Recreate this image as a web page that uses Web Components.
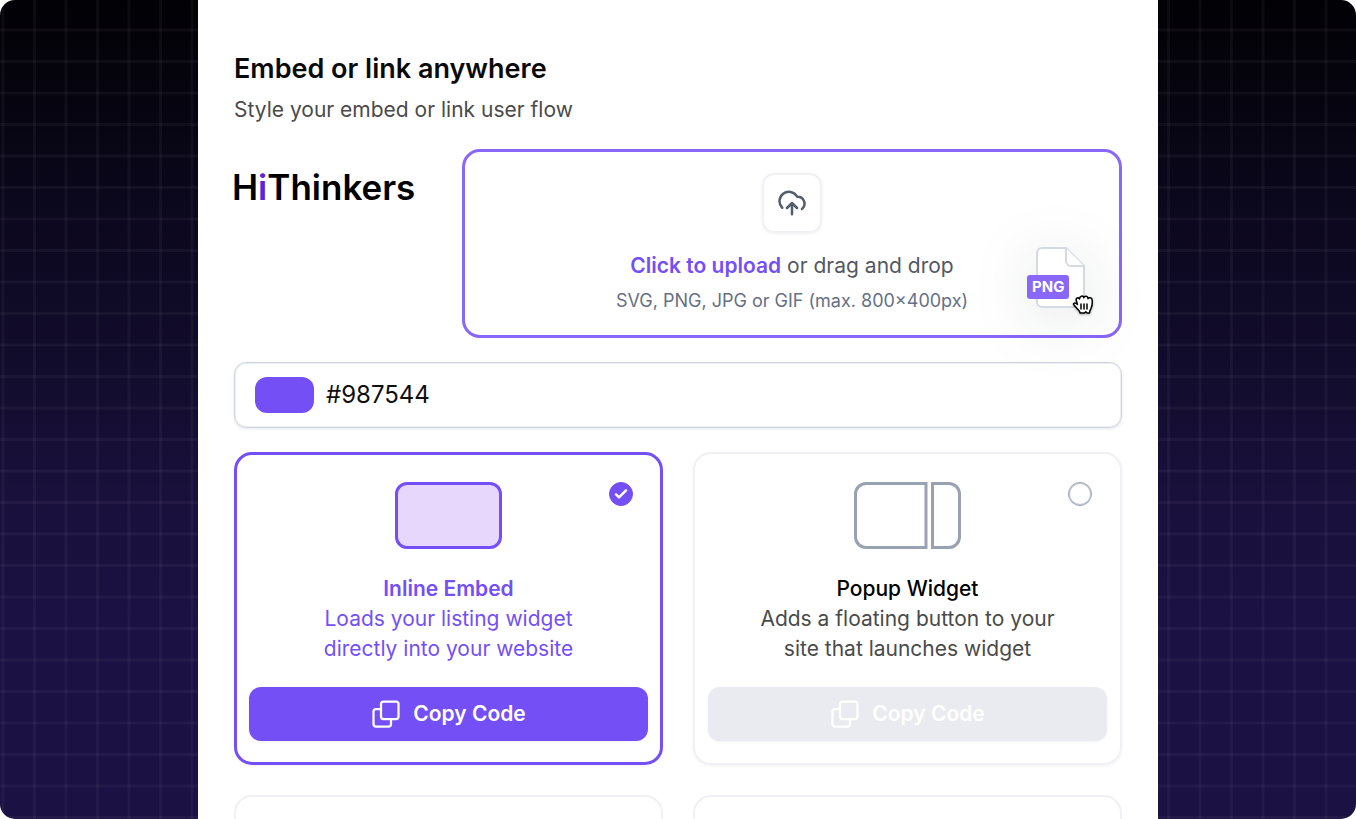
<!DOCTYPE html>
<html lang="en">
<head>
<meta charset="utf-8">
<meta name="viewport" content="width=device-width, initial-scale=1">
<title>Embed or link anywhere</title>
<style>
  body {
    margin: 0;
    background: #fff;
    font-family: Inter, "Liberation Sans", sans-serif;
  }
</style>
</head>
<body>
<embed-page>
  <page-heading>
    <span slot="title">Embed or link anywhere</span>
    <span slot="text">Style your embed or link user flow</span>
  </page-heading>
  <brand-row>
    <brand-logo></brand-logo>
    <upload-box>
      <file-badge type="PNG"></file-badge>
    </upload-box>
  </brand-row>
  <color-field color="#744ff6" value="#987544"></color-field>
  <option-grid>
    <embed-option checked>
      <svg slot="icon" width="107" height="67" viewBox="0 0 107 67" fill="#e8d7fd" stroke="#744ff6" stroke-width="3"><rect x="1.5" y="1.5" width="104" height="64" rx="10.5"/></svg>
      <span slot="title">Inline Embed</span>
      <span slot="text">Loads your listing widget<br>directly into your website</span>
    </embed-option>
    <embed-option>
      <svg slot="icon" width="107" height="67" viewBox="0 0 107 67" fill="none" stroke="#98a2b3" stroke-width="3"><path d="M72 1.5H12A10.500 10.500 0 0 0 1.500 12v43A10.500 10.500 0 0 0 12 65.500h60z"/><path d="M78.500 1.500H95A10.500 10.500 0 0 1 105.500 12v43A10.500 10.500 0 0 1 95 65.500H78.500z"/></svg>
      <span slot="title">Popup Widget</span>
      <span slot="text">Adds a floating button to your<br>site that launches widget</span>
    </embed-option>
    <empty-card></empty-card>
    <empty-card></empty-card>
  </option-grid>
</embed-page>

<script>
class EmbedPage extends HTMLElement {
  constructor() {
    super();
    this.shadowDom = this.attachShadow({ mode: 'open' });
  }

  connectedCallback() {
    this.shadowDom.innerHTML = `
    <style>
      :host {
        --line: rgba(255, 255, 255, .04);
        --soft: rgba(255, 255, 255, .015);
        display: flex;
        justify-content: center;
        height: 100vh;
        overflow: hidden;
        border-radius: 15px;
        background:
          linear-gradient(90deg, transparent 1px, var(--soft) 1px 2px, var(--line) 2px 4px, var(--soft) 4px 5px, transparent 5px 33px, var(--line) 33px 36px, transparent 36px) 0 0 / 63px 63px,
          linear-gradient(transparent 28px, var(--soft) 28px 29px, var(--line) 29px 31px, var(--soft) 31px 32px, transparent 32px 60px, var(--line) 60px 63px) 0 0 / 63px 63px,
          linear-gradient(#020105, #06040f 12%, #0b071c 24%, #130d2f 48%, #1a103c 61%, #1b1142 75%, #1b1142);
      }
      main {
        display: flex;
        flex-direction: column;
        gap: 24px;
        box-sizing: border-box;
        width: 100%;
        max-width: 960px;
        height: max-content;
        min-height: 100%;
        padding: 49px 36px 36px;
        background: #fff;
      }
    </style>
    <main><slot></slot></main>
    `;
  }
}

class PageHeading extends HTMLElement {
  constructor() {
    super();
    this.shadowDom = this.attachShadow({ mode: 'open' });
  }

  connectedCallback() {
    this.shadowDom.innerHTML = `
    <style>
      :host { display: block; }
      h1 {
        margin: 0;
        font-size: 27px;
        font-weight: 600;
        line-height: 40px;
        color: #0a0a0a;
      }
      p {
        margin: 6px 0 0;
        font-size: 21px;
        line-height: 30px;
        color: #4a4a4a;
      }
    </style>
    <h1><slot name="title"></slot></h1>
    <p><slot name="text"></slot></p>
    `;
  }
}

class BrandRow extends HTMLElement {
  constructor() {
    super();
    this.shadowDom = this.attachShadow({ mode: 'open' });
  }

  connectedCallback() {
    this.shadowDom.innerHTML = `
    <style>
      :host {
        display: grid;
        grid-template-columns: 180px 1fr;
        gap: 48px;
      }
    </style>
    <slot></slot>
    `;
  }
}

class BrandLogo extends HTMLElement {
  constructor() {
    super();
    this.shadowDom = this.attachShadow({ mode: 'open' });
  }

  connectedCallback() {
    this.shadowDom.innerHTML = `
    <style>
      :host {
        display: block;
        margin-left: -2px;
        padding-top: 16px;
        font-size: 35px;
        font-weight: 600;
        line-height: 44px;
        color: #000;
        white-space: nowrap;
      }
      span { color: #5925dc; }
    </style>
    H<span>i</span>Thinkers
    `;
  }
}

class UploadBox extends HTMLElement {
  constructor() {
    super();
    this.shadowDom = this.attachShadow({ mode: 'open' });
  }

  connectedCallback() {
    this.shadowDom.innerHTML = `
    <style>
      :host {
        position: relative;
        display: flex;
        flex-direction: column;
        align-items: center;
        box-sizing: border-box;
        padding: 21px 24px;
        border: 3px solid #8867f9;
        border-radius: 18px;
      }
      .icon {
        display: grid;
        place-items: center;
        box-sizing: border-box;
        width: 60px;
        height: 60px;
        margin-bottom: 18px;
        border: 2px solid #f0f1f4;
        border-radius: 12px;
        box-shadow: 0 1px 3px rgba(16, 24, 40, .06);
      }
      p {
        margin: 0;
        font-size: 21px;
        line-height: 30px;
        color: #535862;
      }
      button {
        padding: 0;
        border: 0;
        background: none;
        font: inherit;
        font-weight: 600;
        color: #744ff6;
        cursor: pointer;
      }
      small {
        margin-top: 6px;
        font-size: 18px;
        line-height: 27px;
        color: #667085;
      }
      ::slotted(file-badge) {
        position: absolute;
        right: 24px;
        bottom: 19px;
      }
    </style>
    <div class="icon">
      <svg width="30" height="30" viewBox="0 0 20 20" fill="none" stroke="#535e6c" stroke-width="1.667" stroke-linecap="round" stroke-linejoin="round"><path d="M6.667 13.333 10 10m0 0 3.333 3.333M10 10v7.500m6.667-3.548a4.583 4.583 0 0 0-2.917-8.119.516.516 0 0 1-.444-.25 6.250 6.250 0 1 0-9.816 7.580"/></svg>
    </div>
    <p><button type="button">Click to upload</button> or drag and drop</p>
    <small>SVG, PNG, JPG or GIF (max. 800×400px)</small>
    <slot></slot>
    `;
  }
}

class FileBadge extends HTMLElement {
  constructor() {
    super();
    this.shadowDom = this.attachShadow({ mode: 'open' });
  }

  connectedCallback() {
    this.shadowDom.innerHTML = `
    <style>
      :host {
        display: block;
        width: 68px;
        height: 69px;
      }
      .page {
        display: block;
        margin-left: 9px;
        filter: drop-shadow(0 12px 30px rgba(16, 24, 40, .13));
      }
      .type {
        position: absolute;
        top: 28px;
        left: 0;
        padding: 0 5px;
        border-radius: 3px;
        background: #8867f9;
        font-size: 15px;
        font-weight: 700;
        line-height: 24px;
        color: #fff;
      }
      .hand {
        position: absolute;
        right: 0;
        bottom: 0;
        filter: drop-shadow(0 1px 1px rgba(0, 0, 0, .3));
      }
    </style>
    <svg class="page" width="49" height="61" viewBox="0 0 49 61" fill="#fff" stroke="#d5d9e2" stroke-width="2" stroke-linejoin="round"><path d="M6 1h24l18 18v36a5 5 0 0 1-5 5H6a5 5 0 0 1-5-5V6a5 5 0 0 1 5-5z"/><path d="M30 1v13a5 5 0 0 0 5 5h13"/></svg>
    <span class="type">${this.getAttribute('type')}</span>
    <svg class="hand" width="23" height="22" viewBox="0 0 23 22" fill="#fff" stroke="#000" stroke-width="1.500" stroke-linecap="round" stroke-linejoin="round"><path d="M5.500 10.500 4.300 6.500C3.600 4 6.500 3 7.500 5c0-3.300 3.600-3.800 4.300-1.300 1-2.400 4.200-1.800 4.200 1 .7-1.600 4-1.200 4.200 1.500.3 3.500-.2 6.300-1.200 8.300-.7 1.500-1.500 2.500-1.500 4.500h-2.400l-1.300-1.300-1.300 1.300H8.200c-.4-2-2.200-3.300-3.600-5L1.800 10.800c-1-1.500.8-2.800 3.700-.3z"/><path d="M9 10v5M12 10v5M15 10v5"/></svg>
    `;
  }
}

class ColorField extends HTMLElement {
  constructor() {
    super();
    this.shadowDom = this.attachShadow({ mode: 'open' });
  }

  connectedCallback() {
    this.shadowDom.innerHTML = `
    <style>
      :host {
        display: flex;
        align-items: center;
        gap: 12px;
        box-sizing: border-box;
        height: 66px;
        padding: 0 20px;
        border: 1px solid #d0d5dd;
        border-radius: 12px;
        box-shadow: inset 0 0 0 1px rgba(208, 213, 221, .4), 0 1px 3px rgba(16, 24, 40, .1);
      }
      input {
        margin: 0;
        padding: 0;
        border: 0;
        background: none;
      }
      input[type=color] {
        width: 59px;
        height: 36px;
        appearance: none;
        border-radius: 12px;
        overflow: hidden;
      }
      input[type=color]::-webkit-color-swatch-wrapper { padding: 0; }
      input[type=color]::-webkit-color-swatch { border: 0; }
      input[type=text] {
        flex: 1;
        min-width: 0;
        height: 36px;
        font: 24px/36px Inter, "Liberation Sans", sans-serif;
        color: #101010;
      }
    </style>
    <input type="color" aria-label="Pick color" value="${this.getAttribute('color')}">
    <input type="text" aria-label="Hex color" value="${this.getAttribute('value')}">
    `;
  }
}

class OptionGrid extends HTMLElement {
  constructor() {
    super();
    this.shadowDom = this.attachShadow({ mode: 'open' });
  }

  connectedCallback() {
    this.shadowDom.innerHTML = `
    <style>
      :host {
        display: grid;
        grid-template-columns: 1fr 1fr;
        gap: 30px;
      }
    </style>
    <slot></slot>
    `;
  }
}

class EmbedOption extends HTMLElement {
  constructor() {
    super();
    this.shadowDom = this.attachShadow({ mode: 'open' });
  }

  connectedCallback() {
    const checked = this.hasAttribute('checked');
    this.shadowDom.innerHTML = `
    <style>
      :host {
        position: relative;
        display: flex;
        flex-direction: column;
        box-sizing: border-box;
        padding: 28px 13px 22px;
        border: 2px solid #f0f1f4;
        border-radius: 18px;
        box-shadow: 0 1px 3px rgba(16, 24, 40, .06);
        text-align: center;
        font-size: 21px;
        line-height: 30px;
        color: #4a4a4a;
      }
      :host([checked]) {
        padding: 27px 12px 21px;
        border: 3px solid #744ff6;
        color: #744ff6;
      }
      ::slotted(svg) { display: block; }
      label {
        display: flex;
        flex-direction: column;
        align-items: center;
      }
      h2 {
        margin: 25px 0 0;
        font-size: 21px;
        font-weight: 500;
        line-height: 30px;
        color: #000;
      }
      :host([checked]) h2 {
        font-weight: 600;
        color: inherit;
      }
      p { margin: 0; }
      input {
        position: absolute;
        top: 28px;
        right: 28px;
        width: 24px;
        height: 24px;
        margin: 0;
        appearance: none;
        border: 1px solid #98a2b3;
        border-radius: 50%;
        box-shadow: inset 0 0 0 1px rgba(152, 162, 179, .6);
      }
      :host([checked]) input,
      .tick {
        top: 27px;
        right: 27px;
      }
      input:checked {
        border-color: #744ff6;
        background: #744ff6;
        box-shadow: none;
      }
      .tick {
        position: absolute;
        pointer-events: none;
      }
      button {
        display: flex;
        align-items: center;
        justify-content: center;
        gap: 12px;
        height: 54px;
        margin-top: 23px;
        padding: 0;
        border: 0;
        border-radius: 12px;
        background: #744ff6;
        box-shadow: 0 1px 3px rgba(16, 24, 40, .06);
        font: inherit;
        font-weight: 600;
        color: #fff;
      }
      button:disabled {
        background: #eaebf0;
        color: #fff;
      }
    </style>
    <label>
      <slot name="icon"></slot>
      <h2><slot name="title"></slot></h2>
      <p><slot name="text"></slot></p>
      <input type="radio" ${checked ? 'checked' : ''}>
    </label>
    ${checked ? '<svg class="tick" width="24" height="24" viewBox="0 0 24 24" fill="none" stroke="#fff" stroke-width="2.500" stroke-linecap="round" stroke-linejoin="round"><path d="m7 12.300 3 3 7-7"/></svg>' : ''}
    <button type="button" ${checked ? '' : 'disabled'}>
      <svg width="30" height="30" viewBox="0 0 30 30" fill="none" stroke="currentColor" stroke-width="2.250" stroke-linejoin="round"><rect x="10" y="2.500" width="17.500" height="17.500" rx="2.500"/><path d="M10 10H5a2.500 2.500 0 0 0-2.500 2.500V25A2.500 2.500 0 0 0 5 27.500h12.500A2.500 2.500 0 0 0 20 25v-5"/></svg>
      Copy Code
    </button>
    `;
  }
}

class EmptyCard extends HTMLElement {
  constructor() {
    super();
    this.shadowDom = this.attachShadow({ mode: 'open' });
  }

  connectedCallback() {
    this.shadowDom.innerHTML = `
    <style>
      :host {
        display: block;
        min-height: 280px;
        border: 2px solid #f0f1f4;
        border-radius: 18px;
      }
    </style>
    `;
  }
}

customElements.define('embed-page', EmbedPage);
customElements.define('page-heading', PageHeading);
customElements.define('brand-row', BrandRow);
customElements.define('brand-logo', BrandLogo);
customElements.define('upload-box', UploadBox);
customElements.define('file-badge', FileBadge);
customElements.define('color-field', ColorField);
customElements.define('option-grid', OptionGrid);
customElements.define('embed-option', EmbedOption);
customElements.define('empty-card', EmptyCard);
</script>
</body>
</html>
